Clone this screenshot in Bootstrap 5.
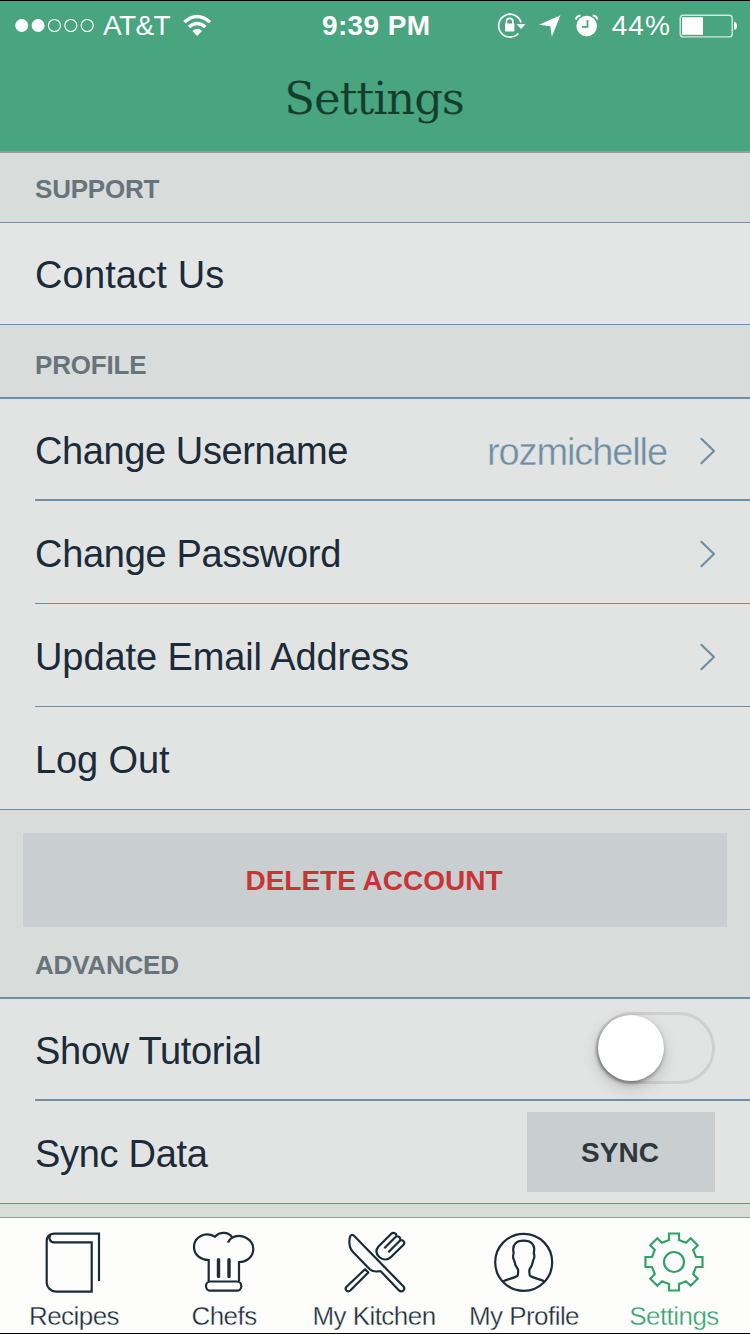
<!DOCTYPE html>
<html lang="en">
<head>
<meta charset="utf-8">
<meta name="viewport" content="width=device-width, initial-scale=1">
<title>Settings</title>
<link href="https://cdn.jsdelivr.net/npm/bootstrap@5.3.0/dist/css/bootstrap.min.css" rel="stylesheet">
<style>
  :root { --green:#48a580; --line:#6d8ea5; --ink:#1b2b39; --group:#d8dcdb; --cell:#e2e4e3; }
  body { font-family:"Liberation Sans", Arial, sans-serif; background:var(--group); color:var(--ink); }
  .screen { width:750px; height:1334px; border-top:1px solid #000; border-bottom:1px solid #000; overflow:hidden; }
  svg { display:block; flex:none; }

  .topbar { height:152px; background:var(--green); border-bottom:2px solid #959d98; }
  .status { height:49px; padding:0 12px 0 15px; color:#fff; font-size:28px; line-height:49px; }
  .status > div { flex:1 1 0; }
  .carrier { letter-spacing:-.6px; margin-left:8px; }
  .clock { font-weight:bold; letter-spacing:.4px; }
  .percent { letter-spacing:1.1px; margin-left:13px; }
  .screen-title { font-family:"DejaVu Serif", serif; font-size:45px; line-height:60px; letter-spacing:-1.2px; color:#143d2c; margin:19px 0 0; padding-right:2px; -webkit-text-stroke:.2px var(--green); font-weight:400; }

  .group-title { font-size:26px; line-height:30px; font-weight:bold; letter-spacing:-.2px; color:#68747b; padding:0 35px 17px; margin:0; }
  section:nth-child(1) .group-title { padding-top:21px; padding-bottom:18px; }
  section:nth-child(2) .group-title { padding-top:25px; }
  section:nth-child(3) .group-title { padding-top:23px; }
  .cells { background:var(--cell); border-top:2px solid var(--line); border-bottom:1px solid var(--line); }
  .cell { height:103px; margin-left:35px; padding:4px 35px 0 0; font-size:38px; line-height:44px; border-bottom:1px solid var(--line); letter-spacing:-.1px; }
  .cell:last-child { border-bottom:0; height:102px; }
  .cell.lead-cell { height:102px; border-bottom-width:2px; }
  .support-cells { border-top-width:1px; background:#e4e6e5; }
  .support-cells .cell { height:101px; padding-top:2px; }
  .cell-value { color:var(--line); letter-spacing:-1.1px; margin-right:33px; padding-top:2px; -webkit-text-stroke:.4px var(--cell); }
  .flat-btn { background:#c9ced1; border:0; border-radius:0; font-size:28px; font-weight:bold; }
  .delete-btn { margin:23px 23px 0; height:94px; padding:2px 2px 0 0; color:#c93436; }
  .sync-btn { width:188px; height:80px; padding:2px 2px 0 0; margin-top:-5px; color:#30373b; }
  .toggle { width:119px; height:72px; border:3px solid #cdd0cf; border-radius:36px; background:transparent; padding:0; margin-top:-6px; }
  .knob { display:block; width:66px; height:66px; margin-left:-1px; border-radius:50%; background:#fff; box-shadow:0 6px 16px rgba(0,0,0,.18), -1px 2px 4px rgba(0,0,0,.4); }
  .adj-wide { letter-spacing:.15px; } .adj-name { letter-spacing:-.4px; } .adj-pass { letter-spacing:-.3px; }

  .tabs { height:116px; background:#fdfdfb; border-top:1px solid #959d98; padding-top:13px; }
  .tab { font-size:26px; line-height:30px; letter-spacing:-.55px; color:var(--ink); text-decoration:none; gap:8px; }
  .tab span { -webkit-text-stroke:.35px #fdfdfb; margin-left:-2px; }
  .tab.on { color:#33a16c; }
  .tab svg { fill:none; stroke:currentColor; stroke-width:2.2; }
</style>
</head>
<body>
<div class="screen d-flex flex-column">
  <header class="topbar flex-shrink-0">
    <div class="status d-flex">
      <div class="d-flex align-items-center">
        <svg width="80" height="16" viewBox="0 0 80 16" fill="none" stroke="#fff" stroke-width="1.1">
          <circle cx="6.7" cy="7.5" r="6.5" fill="#fff" stroke="none"/><circle cx="23.1" cy="7.5" r="6.5" fill="#fff" stroke="none"/>
          <circle cx="39.4" cy="7.5" r="6"/><circle cx="55.8" cy="7.5" r="6"/><circle cx="72.2" cy="7.5" r="6"/>
        </svg>
        <span class="carrier">AT&amp;T</span>
        <svg class="ms-2" width="40" height="24" viewBox="0 0 40 24" fill="none" stroke="#fff" stroke-width="3.3">
          <path d="M6.3 8.2Q19 -3.2 32 8.2M11 13.1Q19.2 6 27.3 13.1"/><path d="M14.4 17Q19.2 12.6 24 17L19.2 22Z" fill="#fff" stroke="none"/>
        </svg>
      </div>
      <div class="clock text-center">9:39 PM</div>
      <div class="d-flex align-items-center justify-content-end">
        <svg width="102" height="26" viewBox="497 12.5 102 26" fill="none" stroke="#fff">
          <path d="M521 22A11.4 11.4 0 1 0 518.3 33" stroke-width="1.7"/><path d="M516.5 23.5H525.5L521 28.5Z" fill="#fff" stroke="none"/>
          <rect x="505" y="23" width="9.4" height="8" rx="1" fill="#fff" stroke="none"/><path d="M506.5 23.5V21a3.2 3.2 0 0 1 6.4 0V23.5" stroke-width="1.7"/>
          <path d="M539 24.2L560.5 14.8L551.8 36.2L550.3 25.7Z" fill="#fff" stroke="none"/>
          <circle cx="586.7" cy="25.5" r="10.3" fill="#fff" stroke="none"/><path d="M587.5 19.5V26.3H582" stroke="#48a580" stroke-width="1.8"/>
          <path d="M576 19Q576.5 15.3 580.5 15M592.8 15Q597 15.3 597.3 19" stroke-width="2"/>
        </svg>
        <span class="percent">44%</span>
        <svg class="ms-2" width="59" height="24" viewBox="679 13.5 59 24">
          <rect x="680.2" y="14.7" width="52" height="21.7" rx="3" fill="none" stroke="#fff" stroke-opacity=".75" stroke-width="1.4"/>
          <path d="M682 16.7H703V34.3H682Z" fill="#fff"/><path d="M734 21.3Q737 22 737 25.4T734 29.5Z" fill="#fff"/>
        </svg>
      </div>
    </div>
    <h1 class="screen-title text-center">Settings</h1>
  </header>

  <main class="flex-grow-1 d-flex flex-column">
    <section>
      <h2 class="group-title">SUPPORT</h2>
      <div class="cells support-cells"><div class="cell d-flex align-items-center"><span class="adj-wide">Contact Us</span></div></div>
    </section>
    <section>
      <h2 class="group-title">PROFILE</h2>
      <div class="cells">
        <div class="cell lead-cell d-flex align-items-center"><span class="adj-name me-auto">Change Username</span><span class="cell-value">rozmichelle</span>
          <svg width="15" height="28" viewBox="0 0 15 28" fill="none" stroke="#6d8ea5" stroke-width="2.2"><path d="M.8 1.2L14 14L.8 26.8"/></svg></div>
        <div class="cell d-flex align-items-center justify-content-between"><span class="adj-pass">Change Password</span>
          <svg width="15" height="28" viewBox="0 0 15 28" fill="none" stroke="#6d8ea5" stroke-width="2.2"><path d="M.8 1.2L14 14L.8 26.8"/></svg></div>
        <div class="cell d-flex align-items-center justify-content-between"><span>Update Email Address</span>
          <svg width="15" height="28" viewBox="0 0 15 28" fill="none" stroke="#6d8ea5" stroke-width="2.2"><path d="M.8 1.2L14 14L.8 26.8"/></svg></div>
        <div class="cell d-flex align-items-center"><span>Log Out</span></div>
      </div>
      <div class="d-grid"><button class="btn flat-btn delete-btn" type="button">DELETE ACCOUNT</button></div>
    </section>
    <section>
      <h2 class="group-title">ADVANCED</h2>
      <div class="cells">
        <div class="cell lead-cell d-flex align-items-center justify-content-between"><span class="adj-pass">Show Tutorial</span>
          <button class="toggle" type="button" role="switch" aria-checked="false" aria-label="Show Tutorial"><span class="knob"></span></button></div>
        <div class="cell d-flex align-items-center justify-content-between"><span class="adj-pass">Sync Data</span><button class="btn flat-btn sync-btn" type="button">SYNC</button></div>
      </div>
    </section>
  </main>

  <nav class="tabs d-flex flex-shrink-0">
    <a class="tab col d-flex flex-column align-items-center" href="#">
      <svg width="64" height="62" viewBox="0 0 64 62"><path d="M56 50V2.7H11C6 2.7 3.7 6 3.7 10V52C3.7 56 8 60.7 13 60.7H48.7V11.3H11C7 11.3 5.2 7 7.5 4"/></svg><span>Recipes</span></a>
    <a class="tab col d-flex flex-column align-items-center" href="#">
      <svg width="64" height="62" viewBox="0 0 64 62"><path d="M15.7 50.5V29C7 29 1 23 1 16C1 6 12 0 22 5.7C27 .5 35 .7 39.3 6.3Q36 8.5 35 11.7M38.5 7C48 1.5 60.3 8 60.3 18C60.3 25.5 54 31 46 31V50.5"/><rect x="13" y="50.5" width="35.3" height="9.2" rx="4.5"/><path d="M25.5 28.8V45.5M36 28.8V45.5" stroke-width="3.4" stroke-linecap="round"/></svg><span>Chefs</span></a>
    <a class="tab col d-flex flex-column align-items-center" href="#">
      <svg width="64" height="62" viewBox="0 0 64 62" stroke-linejoin="round"><path d="M11.5 5.3L60.3 55.3C63 58.5 59 61.8 56.3 59.7L37.7 40.3C34.5 40 31 42 26.5 38L10 21C6.5 17.5 6 11.5 6.7 7C7.2 3.5 9.5 3.2 11.5 5.3Z"/><path d="M22 38.3L25.3 41.5L7.3 59.5C4.5 61.8 1.2 58.5 3.5 55.8ZM41.3 17.3L53.3 5.3C54 2.5 50.5 1 48.3 2.7L35.5 15.5C32.5 19 33 23 36.5 26.3C40 29.5 45 29 48 26L60.3 14C62.5 11.5 60.5 8.8 57.3 9.3L45.3 21.3M57.3 9.3C57.5 6.5 56 5 53.3 5.3"/></svg><span>My Kitchen</span></a>
    <a class="tab col d-flex flex-column align-items-center" href="#">
      <svg width="64" height="62" viewBox="0 0 64 62"><circle cx="30.7" cy="31.3" r="28.5"/><path d="M10.3 50.3C15 48 20 47.5 24.3 45C25.5 43 25.3 41 25 38.5C22 34.5 21.5 31.5 21 29C19.8 27 20 24 20.7 22C18.5 13 24 9.7 30.7 9.7S43 13 40.7 22C41.5 24 41.5 27 40.3 29C39.8 31.5 39.5 34.5 36.5 38.5C36.2 41 36 43 37.2 45C41.5 47.5 46.5 48 51.3 50.3"/></svg><span>My Profile</span></a>
    <a class="tab on col d-flex flex-column align-items-center" href="#">
      <svg width="64" height="62" viewBox="-31 -31 64 62"><circle r="10"/><path d="M-5 -28.5H5V-22L12 -19.2L16.7 -23.7L23.7 -16.7L19.2 -12L22 -5H28.5V5H22L19.2 12L23.7 16.7L16.7 23.7L12 19.2L5 22V28.5H-5V22L-12 19.2L-16.7 23.7L-23.7 16.7L-19.2 12L-22 5H-28.5V-5H-22L-19.2 -12L-23.7 -16.7L-16.7 -23.7L-12 -19.2L-5 -22Z"/></svg><span>Settings</span></a>
  </nav>
</div>
<script src="https://cdn.jsdelivr.net/npm/bootstrap@5.3.0/dist/js/bootstrap.bundle.min.js"></script>
</body>
</html>
